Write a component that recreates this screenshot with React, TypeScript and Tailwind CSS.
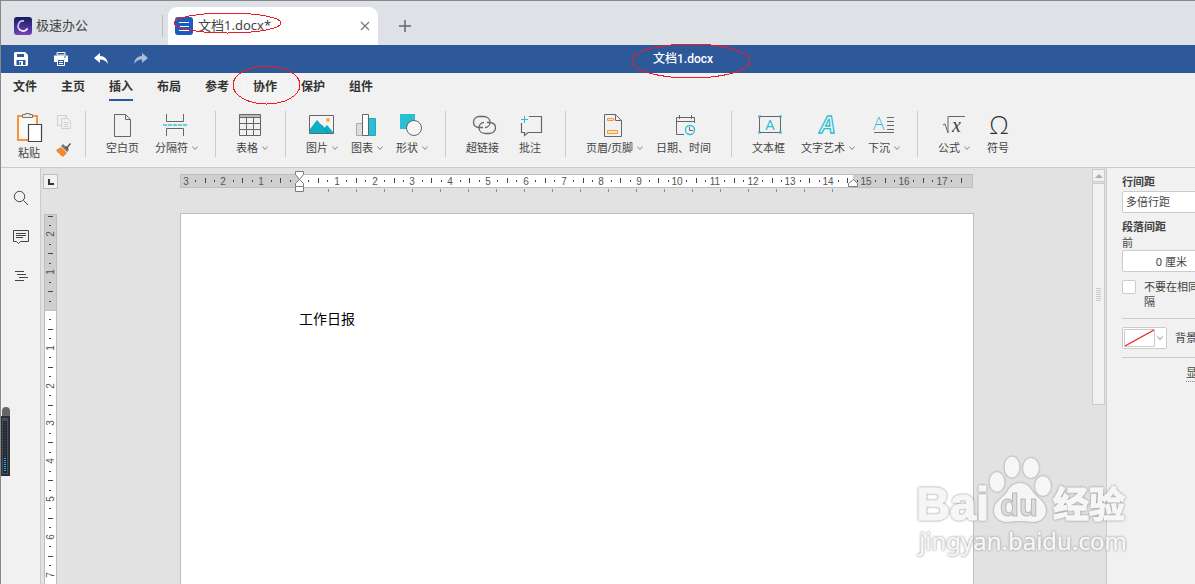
import { ReactNode, useEffect, useState } from 'react';

const CM = 37.8;
const TEAL = '#2bbfd6';
const INK = '#666666';

interface Tool {
  label: string;
  icon: ReactNode;
  menu?: boolean;
}

const menuTabs = ['文件', '主页', '插入', '布局', '参考', '协作', '保护', '组件'];

function Icon({ children }: { children: ReactNode }) {
  return (
    <svg width="28" height="28" viewBox="0 0 28 28" fill="none" stroke={INK} aria-hidden="true">
      {children}
    </svg>
  );
}

const toolGroups: Tool[][] = [
  [
    {
      label: '空白页',
      icon: (
        <Icon>
          <path d="M5.5 3.5h11l5 5v17h-16z" />
          <path d="M16.5 3.5v5h5" />
        </Icon>
      ),
    },
    {
      label: '分隔符',
      menu: true,
      icon: (
        <Icon>
          <path d="M5.5 3v7.5h17V3M5.5 25v-7.5h17V25" />
          <path d="M2 14h24" stroke={TEAL} strokeWidth="2" strokeDasharray="4 1" opacity="0.7" />
        </Icon>
      ),
    },
  ],
  [
    {
      label: '表格',
      menu: true,
      icon: (
        <Icon>
          <path d="M3 3h22v3H3z" fill="#bdb9bd" stroke="none" />
          <path d="M3.5 3.5h21v21h-21zM3.5 6.5h21M3.5 12.5h21M3.5 18.5h21M10.5 6.5v18M17.5 6.5v18" />
        </Icon>
      ),
    },
  ],
  [
    {
      label: '图片',
      menu: true,
      icon: (
        <Icon>
          <path d="M3.5 4.5h24v18h-24z" fill="#f4f4f4" />
          <path d="M4 18l7-9 7 8 3-3 6 7v1H4z" fill="#0aafc8" stroke="none" />
          <path d="M15 13.5l7 8" stroke="#0a8da3" />
          <circle cx="22" cy="9" r="2" fill="#f9ae46" stroke="none" />
        </Icon>
      ),
    },
    {
      label: '图表',
      menu: true,
      icon: (
        <Icon>
          <path d="M5.5 12.5h6v12h-6z" fill="#dddddd" stroke="#aaaaaa" />
          <path d="M17.5 7.5h7v17h-7z" fill={TEAL} stroke="#27a7bb" />
          <path d="M11.5 3.5h6v21h-6z" fill="#ffffff" />
        </Icon>
      ),
    },
    {
      label: '形状',
      menu: true,
      icon: (
        <Icon>
          <path d="M4 3h15v15H4z" fill={TEAL} stroke="none" />
          <circle cx="18" cy="17" r="7.5" fill="#f5f5f5" />
        </Icon>
      ),
    },
  ],
  [
    {
      label: '超链接',
      icon: (
        <Icon>
          <g strokeWidth="1.3">
            <path d="M14 16.5h-3.5C6.500 16.500 4.500 14 4.500 11S7 5.500 10.500 5.500h4c4 0 6.500 2.500 6.500 5.500 0 3-2 5.500-5 5.500" />
            <path d="M18 11.500h2.500c4 0 6 2.500 6 5.500s-2.500 5.500-6 5.500h-4c-4 0-6.500-2.500-6.500-5.500 0-3 2-5.500 5-5.500" />
          </g>
        </Icon>
      ),
    },
    {
      label: '批注',
      icon: (
        <Icon>
          <path d="M13 5.5h12.500v16H12l-3.500 3v-3h-3V12" strokeWidth="1.2" />
          <path d="M8.500 5v7M5 8.500h7" stroke={TEAL} />
        </Icon>
      ),
    },
  ],
  [
    {
      label: '页眉/页脚',
      menu: true,
      icon: (
        <Icon>
          <path d="M5.5 3.5h11l6 6v16h-17z" />
          <path d="M16.5 3.5v6h6" />
          <path d="M8.5 7.5h6v2h-6zM8.5 19.5h10v3h-10z" stroke="#f09a44" fill="#fde5b8" />
        </Icon>
      ),
    },
    {
      label: '日期、时间',
      icon: (
        <Icon>
          <path d="M24.5 12V6.500h-18v17H14M6.500 10.500h18M9.500 4v4M21.500 4v4" />
          <circle cx="20" cy="19" r="4.5" stroke={TEAL} strokeWidth="1.3" fill="#f1f1f1" />
          <path d="M19.500 16v3.500H23" />
        </Icon>
      ),
    },
  ],
  [
    {
      label: '文本框',
      icon: (
        <Icon>
          <path d="M4.5 5.500h21v16h-21z" />
          <path d="M3 4h3v3H3zM24 4h3v3h-3zM3 20h3v3H3zM24 20h3v3h-3z" fill={TEAL} stroke="none" opacity="0.6" />
          <text x="15" y="19" fontSize="15" textAnchor="middle" fill={TEAL} stroke="none" className="font-['Open_Sans',sans-serif]">A</text>
        </Icon>
      ),
    },
    {
      label: '文字艺术',
      menu: true,
      icon: (
        <Icon>
          <text x="7" y="22" fontSize="23" fontWeight="bold" fontStyle="italic" fill="#f1f1f1" stroke={TEAL} strokeWidth="1.3" className="font-['Liberation_Sans',sans-serif]">A</text>
        </Icon>
      ),
    },
    {
      label: '下沉',
      menu: true,
      icon: (
        <Icon>
          <text x="5" y="19" fontSize="19" fill={TEAL} stroke="none" className="font-['Open_Sans',sans-serif] font-light">A</text>
          <path d="M19 6.500h7M19 10.500h7M19 14.500h7M19 18.500h7M6 21.500h20" />
        </Icon>
      ),
    },
  ],
  [
    {
      label: '公式',
      menu: true,
      icon: (
        <Icon>
          <path d="M5 14l2-1 3 9V5.500h17" />
          <text x="14" y="21" fontSize="20" fontStyle="italic" fill="#444444" stroke="none" className="font-['Liberation_Serif',serif]">x</text>
        </Icon>
      ),
    },
    {
      label: '符号',
      icon: (
        <Icon>
          <text x="15" y="23" fontSize="25" textAnchor="middle" fill="#333333" stroke="none" className="font-['Open_Sans',sans-serif] font-light">Ω</text>
        </Icon>
      ),
    },
  ],
];

function Chevron() {
  return (
    <svg width="6" height="6" viewBox="0 0 6 6" fill="none" stroke="#888888" aria-hidden="true">
      <path d="M0.5 1.5L3 4.500 5.500 1.500" />
    </svg>
  );
}

function ToolButton({ tool }: { tool: Tool }) {
  if (tool.menu) {
    return (
      <button type="button" className="flex flex-col items-center">
        <span className="pr-1">{tool.icon}</span>
        <span className="flex items-center gap-1 leading-[18px] whitespace-nowrap">
          {tool.label}
          <Chevron />
        </span>
      </button>
    );
  }
  return (
    <button type="button" className="flex min-w-[33px] flex-col items-center pr-[3px]">
      {tool.icon}
      <span className="leading-[18px] whitespace-nowrap">{tool.label}</span>
    </button>
  );
}

function Marker({ width, height, className }: { width: number; height: number; className: string }) {
  return (
    <svg width={width} height={height} className={`pointer-events-none absolute z-10 ${className}`} aria-hidden="true">
      <ellipse
        cx={width / 2}
        cy={height / 2}
        rx={width / 2 - 1}
        ry={height / 2 - 1}
        fill="none"
        stroke="#ed1c24"
        shapeRendering="crispEdges"
      />
    </svg>
  );
}

function TitleTabs() {
  return (
    <div className="flex h-11 items-end bg-[#dee1e6] text-[#444444]">
      <div className="flex h-[38px] w-[161px] items-center gap-1 pl-[13px]">
        <svg width="18" height="18" viewBox="0 0 18 18" fill="none" aria-hidden="true">
          <defs>
            <linearGradient id="logo" x1="0" y1="0" x2="0" y2="1">
              <stop offset="0" stopColor="#141a63" />
              <stop offset="1" stopColor="#7444b8" />
            </linearGradient>
          </defs>
          <rect width="18" height="18" rx="3" fill="url(#logo)" />
          <path d="M13.5 11.5A5 5 0 1 1 10 4" stroke="#c9b8ee" strokeWidth="1.8" />
          <path d="M13.5 11.5A5 5 0 0 1 5 12" stroke="#ffffff" strokeWidth="1.2" />
        </svg>
        <span className="text-[13px]">极速办公</span>
      </div>
      <div className="h-[38px] w-px py-2">
        <div className="h-[22px] w-px bg-[#b9bcc2]" />
      </div>
      <div className="relative ml-[5px] flex h-[38px] w-[210px] items-center rounded-t-[9px] bg-white pr-2 pl-[7px]">
        <svg width="18" height="18" viewBox="0 0 18 18" fill="none" stroke="#ffffff" aria-hidden="true">
          <rect width="18" height="18" rx="3" fill="#1b5cbe" stroke="none" />
          <path d="M4 5.5h10M5 9.5h9M4 13.5h10" />
        </svg>
        <span className="ml-[5px] flex-1 text-[13px]">文档1.docx*</span>
        <button type="button" aria-label="关闭" className="flex size-[10px]">
          <svg width="10" height="10" viewBox="0 0 10 10" stroke="#777777" strokeWidth="1.2" aria-hidden="true">
            <path d="M1 1l8 8M9 1L1 9" />
          </svg>
        </button>
        <Marker width={109} height={22} className="top-[5px] left-[5px]" />
      </div>
      <button type="button" aria-label="新建" className="ml-[21px] flex h-[38px] items-center">
        <svg width="12" height="12" viewBox="0 0 12 12" stroke="#666666" strokeWidth="1.5" aria-hidden="true">
          <path d="M6 0v12M0 6h12" />
        </svg>
      </button>
    </div>
  );
}

function QuickBar() {
  return (
    <div className="flex h-7 bg-[#2d599b] text-white">
      <div className="flex pr-[10px]">
        <button type="button" aria-label="保存" className="flex w-10 items-center justify-center">
          <svg width="14" height="14" viewBox="0 0 14 14" fill="#ffffff" aria-hidden="true">
            <path d="M1 0h10l3 3v10l-1 1H1l-1-1V1z" />
            <path d="M3 2h7v3H3zM2.500 8h9v5h-9z" fill="#2d599b" />
            <path d="M5 9h4v5H5z" />
            <path d="M5.500 10h1.500v3H5.500z" fill="#2d599b" />
          </svg>
        </button>
        <button type="button" aria-label="打印" className="flex w-10 items-center justify-center">
          <svg width="14" height="14" viewBox="0 0 14 14" fill="#ffffff" aria-hidden="true">
            <path d="M3 .5h8V3H3z" fill="none" stroke="#ffffff" />
            <path d="M0 3.500h14V10h-3V7H3v3H0z" />
            <path d="M3.500 7.500h7v6h-7z" fill="#2d599b" stroke="#ffffff" />
            <path d="M5 9.500h4M5 11.500h4" stroke="#ffffff" />
            <path d="M10 4.500h2v1h-2z" fill="#2d599b" />
          </svg>
        </button>
        <button type="button" aria-label="撤销" className="flex w-10 items-center justify-center">
          <svg width="14" height="12" viewBox="0 0 14 12" fill="#ffffff" aria-hidden="true">
            <path d="M0 5l6-5v3c4.500 0 7.500 3 8 8-2-3-4-4.500-8-4.500V10z" />
          </svg>
        </button>
        <button type="button" aria-label="重做" className="flex w-10 items-center justify-center opacity-60">
          <svg width="14" height="12" viewBox="0 0 14 12" fill="#ffffff" aria-hidden="true">
            <path d="M14 5L8 0v3C3.500 3 .5 6 0 11c2-3 4-4.500 8-4.500V10z" />
          </svg>
        </button>
      </div>
      <div className="flex flex-1 justify-center">
        <h1 className="relative font-['Roboto','Noto_Sans_CJK_SC',sans-serif] text-xs leading-7 font-medium">
          文档1.docx
          <Marker width={120} height={36} className="-top-0.5 -left-[22px] max-w-none" />
        </h1>
      </div>
    </div>
  );
}

function Ribbon() {
  return (
    <header className="border-b border-[#cbcbcb] bg-[#f1f1f1] font-['Liberation_Sans','Noto_Sans_CJK_SC',sans-serif] text-[11px] text-[#444444]">
      <nav className="flex h-7 text-xs font-bold text-[#333333]">
        {menuTabs.map((tab) => (
          <button key={tab} type="button" className={`relative px-3 ${tab === '协作' ? 'bg-[#f4f4f4]' : ''}`}>
            <span className={`block h-7 border-b-2 leading-7 ${tab === '插入' ? 'border-[#2d599b]' : 'border-transparent'}`}>
              {tab}
            </span>
            {tab === '协作' && <Marker width={69} height={40} className="-top-2 -left-[9px] max-w-none" />}
          </button>
        ))}
      </nav>
      <div className="flex h-[66px] items-start pt-[10px]">
        <div className="flex gap-3 pr-[13px] pl-[14px]">
          <button type="button" className="flex flex-col items-center">
            <svg width="28" height="34" viewBox="0 0 28 34" fill="none" aria-hidden="true">
              <path d="M3 5h19v24H3z" fill="#fff6e4" stroke="#f0954a" strokeWidth="2" />
              <path d="M6 8h13v18H6z" fill="#fafafa" />
              <path d="M7.500 6.500v-3h3v-1h4v1h3v3z" fill="#e9e9e9" stroke="#777777" />
              <path d="M13.500 13.500h13v17h-13z" fill="#ffffff" stroke="#444444" strokeWidth="1.2" />
            </svg>
            <span className="mt-0.5 leading-3">粘贴</span>
          </button>
          <div className="flex flex-col gap-3 pt-1 pl-px">
            <button type="button" aria-label="复制" className="block">
              <svg width="16" height="16" viewBox="0 0 16 16" fill="#f1f1f1" stroke="#cfcfcf" aria-hidden="true">
                <path d="M1.500.5h9v10h-9z" />
                <path d="M5.500 3.500h6l3 3v7h-9z" />
                <path d="M7.500 7.500h5M7.500 9.500h5M7.500 11.500h5" />
              </svg>
            </button>
            <button type="button" aria-label="格式刷" className="block">
              <svg width="16" height="16" viewBox="0 0 16 16" aria-hidden="true">
                <path d="M0 7l5-3 6 6-4 4-3-2-1-2-1 0z" fill="#f28a2d" />
                <path d="M5 3l2-2 6 6-2 2z" fill="#777777" />
                <path d="M9 4l1-1 1 .5L14 0l1 1-3 3.500.500 1L11.500 6.500z" fill="#555555" />
              </svg>
            </button>
          </div>
        </div>
        {toolGroups.map((group) => (
          <div key={group[0].label} className="flex h-[46px] gap-[13px] border-l border-[#cbcbcb] pr-[17px] pl-5">
            {group.map((tool) => (
              <ToolButton key={tool.label} tool={tool} />
            ))}
          </div>
        ))}
      </div>
    </header>
  );
}

// quarter marks of a ruler between two positions, in centimetres
function quarters(from: number, to: number) {
  const marks: number[] = [];
  for (let q = Math.ceil(from * 4); q <= to * 4; q++) {
    if (q !== 0) marks.push(q);
  }
  return marks;
}

function HorizontalRuler() {
  const zero = 119;
  const end = 673;
  return (
    <svg width="794" height="22" viewBox="0 0 794 22" className="shrink-0 font-['Liberation_Sans',sans-serif]" aria-hidden="true">
      <rect x="0.5" y="3.5" width="792" height="13" fill="#cfcfcf" stroke="#bbbec2" />
      <rect x={zero} y="4" width={end - zero} height="12" fill="#ffffff" />
      {quarters(-3, 17.5).map((q) => {
        const x = Math.round(zero + (q / 4) * CM);
        if (q % 4 === 0) {
          return (
            <text key={q} x={x} y="14" fontSize="10" textAnchor="middle" fill="#555555">
              {Math.abs(q / 4)}
            </text>
          );
        }
        return q % 2 === 0 ? (
          <rect key={q} x={x} y="7" width="1" height="5" fill="#444444" />
        ) : (
          <rect key={q} x={x} y="9" width="1" height="2" fill="#444444" />
        );
      })}
      {Array.from({ length: 19 }, (_, i) => (
        <rect key={i} x={148 + i * 28} y="18" width="1" height="3" fill="#8a8d92" />
      ))}
      <g fill="#ffffff" stroke="#777b82">
        <path d="M115.500.5h8v3l-4 5-4-5zM119.500 8.500l4 4v3h-8v-3z" />
        <path d="M115.500 15.500h8v5h-8z" />
        <path d="M673.500 8.500l4 4v3h-9v-3z" />
      </g>
    </svg>
  );
}

const RULER_TOP = 214;

function VerticalRuler() {
  const zero = 96;
  const [height, setHeight] = useState(window.innerHeight - RULER_TOP);

  useEffect(() => {
    const onResize = () => setHeight(window.innerHeight - RULER_TOP);
    window.addEventListener('resize', onResize);
    return () => window.removeEventListener('resize', onResize);
  }, []);

  return (
    <svg width="13" height={height} className="font-['Liberation_Sans',sans-serif]" aria-hidden="true">
      <rect x="0.5" y="0.5" width="12" height={height} fill="#ffffff" stroke="#bbbec2" />
      <rect x="1" y="1" width="11" height={zero} fill="#cfcfcf" />
      <rect x="0" y={zero} width="13" height="1" fill="#bbbec2" />
      {quarters(-2.5, (height - zero - 8) / CM).map((q) => {
        const y = Math.round(zero + (q / 4) * CM);
        if (q % 4 === 0) {
          return (
            <text key={q} transform={`translate(10 ${y}) rotate(-90)`} fontSize="10" textAnchor="middle" fill="#555555">
              {Math.abs(q / 4)}
            </text>
          );
        }
        return q % 2 === 0 ? (
          <rect key={q} x="4" y={y} width="5" height="1" fill="#444444" />
        ) : (
          <rect key={q} x="5" y={y} width="2" height="1" fill="#444444" />
        );
      })}
    </svg>
  );
}

function SideBar() {
  return (
    <aside className="flex w-10 shrink-0 flex-col items-center gap-[23px] border-r border-[#cbcbcb] bg-[#f1f1f1] pt-[22px]">
      <button type="button" aria-label="查找">
        <svg width="16" height="16" viewBox="0 0 16 16" fill="none" stroke="#444444" aria-hidden="true">
          <circle cx="6.5" cy="6.5" r="5.2" />
          <path d="M10.5 10.5l4.5 4.500" />
        </svg>
      </button>
      <button type="button" aria-label="批注列表">
        <svg width="16" height="16" viewBox="0 0 16 16" fill="none" stroke="#444444" aria-hidden="true">
          <path d="M.5 1.500h15v11H7.500l-2 2-2-2h-3zM3 4.500h10M3 6.500h10M3 8.500h7" />
        </svg>
      </button>
      <button type="button" aria-label="导航">
        <svg width="16" height="16" viewBox="0 0 16 16" fill="none" stroke="#444444" aria-hidden="true">
          <path d="M2 3.500h9M4 6.500h9M6 9.500h9M2 12.500h9" />
        </svg>
      </button>
    </aside>
  );
}

function SettingsPanel() {
  return (
    <aside className="w-[89px] shrink-0 overflow-hidden border-l border-[#cbcbcb] bg-[#f1f1f1] pt-[6px] pl-[15px] text-[11px] leading-4 text-[#444444]">
      <div className="w-[180px]">
        <label htmlFor="line-spacing" className="block font-bold">行间距</label>
        <select
          id="line-spacing"
          className="mt-px block h-[22px] w-[90px] appearance-none rounded-[2px] border border-[#cbcbcb] bg-white pl-[3px]"
        >
          <option>多倍行距</option>
        </select>
        <h2 className="mt-[6px] font-bold">段落间距</h2>
        <label htmlFor="before" className="block leading-[15px]">前</label>
        <input
          id="before"
          defaultValue="0 厘米"
          className="block h-[22px] w-[90px] rounded-[2px] border border-[#cbcbcb] bg-white pr-6 text-right"
        />
        <div className="mt-[7px] flex gap-2">
          <input
            id="same-style"
            type="checkbox"
            className="mt-px size-[14px] shrink-0 appearance-none rounded-[2px] border border-[#cbcbcb] bg-white"
          />
          <label htmlFor="same-style" className="leading-[15px]">
            不要在相同
            <br />隔
          </label>
        </div>
        <div className="mt-[9px] border-t border-[#cbcbcb]" />
        <div className="mt-2 flex items-center gap-2">
          <button
            type="button"
            aria-label="背景颜色"
            className="flex h-[22px] w-[45px] items-center justify-between rounded-[2px] border border-[#cbcbcb] bg-white pr-[3px] pl-px"
          >
            <svg width="31" height="18" viewBox="0 0 31 18" fill="none" aria-hidden="true">
              <path d="M.5.5h30v17H.5z" stroke="#cbcbcb" />
              <path d="M1 17L30 1" stroke="#f02020" strokeWidth="1.3" />
            </svg>
            <Chevron />
          </button>
          <span>背景</span>
        </div>
        <div className="mt-2 border-t border-[#cbcbcb]" />
        <a href="#advanced" className="mt-[7px] ml-16 inline-block border-b border-dotted border-[#888888]">
          显
        </a>
      </div>
    </aside>
  );
}

function Watermark() {
  return (
    <svg
      width="220"
      height="106"
      viewBox="0 0 220 106"
      className="pointer-events-none absolute right-[62px] bottom-[24px] drop-shadow-[0_0_1px_#888888]"
      aria-hidden="true"
    >
      <g fill="#f6f6f6" strokeLinejoin="round">
        <g fontWeight="bold" stroke="#f6f6f6" strokeWidth="1.5">
          <text x="3" y="66" fontSize="47" className="font-['Liberation_Sans',sans-serif]">Bai</text>
          <text x="140" y="64" fontSize="36" className="font-['Noto_Sans_CJK_SC',sans-serif]">经验</text>
        </g>
        <ellipse cx="84" cy="28" rx="7.5" ry="10" />
        <ellipse cx="99" cy="13" rx="7.5" ry="10.500" />
        <ellipse cx="118" cy="14" rx="8" ry="10" />
        <ellipse cx="130" cy="32" rx="8" ry="10" />
        <path d="M107 29c7 0 10 4 13 9 4 6 13 10 13 18 0 8-6 12-13 12-5 0-8-1-13-1s-8 1-13 1c-8 0-13-5-13-12 0-8 9-12 13-18 3-5 6-9 13-9z" />
        <text x="106" y="62" fontSize="31" fontWeight="bold" textAnchor="middle" fill="#dcdcdc" stroke="#b8b8b8" className="font-['Liberation_Sans',sans-serif]">du</text>
        <text x="6" y="96" fontSize="24" stroke="#f6f6f6" strokeWidth="0.5" className="font-['Noto_Sans',sans-serif]">jingyan.baidu.com</text>
      </g>
    </svg>
  );
}

function LevelMeter() {
  return (
    <svg width="10" height="70" viewBox="0 0 10 70" className="absolute top-[406px] -left-px" aria-hidden="true">
      <path d="M2 9V4q0-4 4-4t4 4v5z" fill="#666666" />
      <path d="M0 9h10v60H0z" fill="#2b3038" />
      <path d="M2 11h6v56H2z" fill="#46525e" />
      <path d="M3 14h4v52H3z" fill="#20262d" />
      <path d="M5 15v35" stroke="#4a3f45" strokeWidth="2" strokeDasharray="1 1" />
      <path d="M5 51v14" stroke="#27a9ec" strokeWidth="2" strokeDasharray="1 1" />
    </svg>
  );
}

export default function App() {
  return (
    <div className="relative flex h-screen flex-col overflow-hidden border-t border-l border-[#888888] bg-[#e2e2e2] font-['Noto_Sans','Noto_Sans_CJK_SC',sans-serif]">
      <TitleTabs />
      <QuickBar />
      <Ribbon />
      <main className="flex min-h-0 flex-1">
        <SideBar />
        <section className="flex min-w-0 flex-1 overflow-hidden">
          <div className="w-[21px] shrink-0 pt-[6px] pl-0.5">
            <button type="button" aria-label="制表符" className="flex size-[15px] items-center justify-center border border-[#bbbec2] bg-[#f1f1f1]">
              <svg width="6" height="6" viewBox="0 0 6 6" fill="none" stroke="#333333" strokeWidth="2" aria-hidden="true">
                <path d="M1 0v5h5" />
              </svg>
            </button>
            <div className="mt-[25px] ml-px">
              <VerticalRuler />
            </div>
          </div>
          <div className="flex min-w-0 flex-1 flex-col items-center pt-[3px]">
            <HorizontalRuler />
            <article className="mt-5 w-[794px] flex-1 border border-b-0 border-[#bbbec2] bg-white px-[118px] pt-[95px] text-sm leading-5 text-black">
              <p>工作日报</p>
            </article>
          </div>
        </section>
        <div className="flex w-[14px] shrink-0 flex-col gap-px pt-px">
          <button type="button" aria-label="向上滚动" className="flex h-[13px] w-[13px] items-center justify-center border border-[#cbcbcb] bg-[#f1f1f1]">
            <svg width="8" height="4" viewBox="0 0 8 4" fill="#adadad" aria-hidden="true">
              <path d="M0 4l4-4 4 4z" />
            </svg>
          </button>
          <div className="flex h-[222px] w-[13px] items-center justify-center border border-[#cbcbcb] bg-[#f1f1f1]">
            <svg width="5" height="13" viewBox="0 0 5 13" stroke="#cbcbcb" aria-hidden="true">
              <path d="M0 .5h5M0 2.500h5M0 4.500h5M0 6.500h5M0 8.500h5M0 10.500h5M0 12.500h5" />
            </svg>
          </div>
        </div>
        <SettingsPanel />
      </main>
      <Watermark />
      <LevelMeter />
    </div>
  );
}
